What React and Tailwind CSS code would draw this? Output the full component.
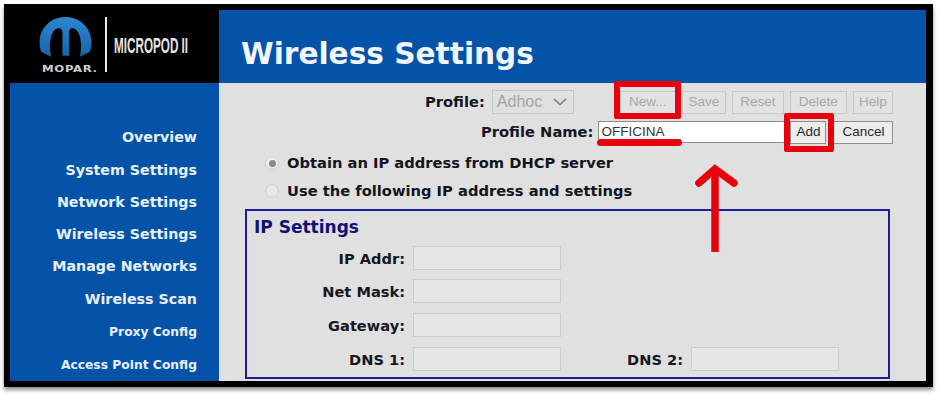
const sans = "font-['Liberation_Sans',Arial,sans-serif]";
const dv = "font-['DejaVu_Sans',Verdana,sans-serif]";

function Nav({ children, small, h }) {
  return (
    <div className={`${h} flex items-center justify-end pr-[22px] font-bold text-[#e8f0fa] ${small ? "text-[12.3px]" : "text-[14.25px]"}`}>
      {children}
    </div>
  );
}

function Btn({ children, w, disabled }) {
  return (
    <div
      className={`h-[23px] ${w} flex items-center justify-center border text-[13.5px] ${sans} ${
        disabled ? "border-[#c8c8c8] text-[#a8a8a8] bg-[#e2e2e2]" : "border-[#8f8f8f] text-[#2a2a2a] bg-[#ececec]"
      }`}
    >
      {children}
    </div>
  );
}

function Field({ label, lw, w = "w-[148px]" }) {
  return (
    <>
      <div className={`${lw} pt-[1px] text-right font-bold text-[14.6px] text-[#16161e] mr-[8px]`}>{label}</div>
      <div className={`${w} h-[24px] border border-[#cccccc] bg-[#e6e6e6]`} />
    </>
  );
}

export default function App() {
  return (
    <div className={`w-[945px] h-[400px] bg-white pl-[4px] pt-[4px] ${dv}`}>
      <div className="relative w-[929px] h-[383px] bg-black p-[6px] shadow-[0_3px_4px_rgba(0,0,0,0.45)]">
        <div className="grid grid-cols-[209px_707px] grid-rows-[73px_298px] h-full">
          <div className="relative -ml-[6px] -mt-[6px] bg-black w-[215px] h-[79px]">
            <svg className="absolute left-[34px] top-[11px]" width="55" height="47" viewBox="0 0 54 46">
              <defs>
                <linearGradient id="mopar" x1="0" y1="0" x2="0" y2="1">
                  <stop offset="0" stopColor="#2a86d2" />
                  <stop offset="1" stopColor="#1666ac" />
                </linearGradient>
              </defs>
              <path d="M3 36C-3 16 11 2 27 2C43 2 57 16 51 36L41 41C44 30 42 14 34 13C31 13 30.5 15 30.5 18L30.5 40L24 40L24 18C24 15 23 13 20 13C12 14 10 30 13 41Z" fill="url(#mopar)" />
            </svg>
            <div className="absolute left-[38px] top-[60px] text-[9px] leading-[10px] font-bold text-[#cfcfcf] tracking-[0.5px] scale-x-[1.3] origin-left">MOPAR.</div>
            <div className="absolute left-[101px] top-[13px] w-[2px] h-[55px] bg-[#e8e8e8]" />
            <div className={`absolute left-[110px] top-[30px] text-[22.5px] leading-[24px] font-bold text-[#e4e4e4] whitespace-nowrap scale-x-[0.52] origin-left ${sans}`}>MICROPOD II</div>
          </div>
          <div className="bg-[#0553a8] flex items-center pl-[22px] pt-[17px]">
            <div className="text-[29.6px] font-bold text-[#f2f5fa] leading-none">Wireless Settings</div>
          </div>

          <div className="bg-[#0553a8] pt-[38px]">
            <Nav h="h-[33px]">Overview</Nav>
            <Nav h="h-[33px]">System Settings</Nav>
            <Nav h="h-[31px]">Network Settings</Nav>
            <Nav h="h-[33px]">Wireless Settings</Nav>
            <Nav h="h-[32px]">Manage Networks</Nav>
            <Nav h="h-[33px]">Wireless Scan</Nav>
            <Nav small h="h-[33px]">Proxy Config</Nav>
            <Nav small h="h-[33px]">Access Point Config</Nav>
          </div>

          <div className="bg-[#e0e0e0] pt-[6px] overflow-hidden">
            <div className="flex items-center h-[26px]">
              <div className="ml-[206px] text-[14.7px] font-bold text-[#16161e]">Profile:</div>
              <div className={`ml-[7px] w-[82px] h-[24px] border border-[#c6c6c6] pl-[4px] pr-[6px] flex items-center justify-between text-[16px] text-[#a4a4a4] ${sans}`}>
                Adhoc
                <svg width="14" height="8" viewBox="0 0 14 8" fill="none" stroke="#777" strokeWidth="1.6"><path d="M1 1l6 5.5L13 1" /></svg>
              </div>
              <div className="ml-[46px] flex gap-[6px]">
                <Btn disabled w="w-[56px]">New...</Btn>
                <Btn disabled w="w-[44px]">Save</Btn>
                <Btn disabled w="w-[52px]">Reset</Btn>
                <Btn disabled w="w-[57px]">Delete</Btn>
                <Btn disabled w="w-[40px]">Help</Btn>
              </div>
            </div>
            <div className="flex items-center h-[26px] mt-[4px]">
              <div className="ml-[262px] text-[14.7px] font-bold text-[#16161e]">Profile Name:</div>
              <div className={`ml-[5px] w-[192px] h-[22px] bg-white border border-[#8a8a8a] pl-[2px] flex items-center text-[13.5px] text-[#333] ${sans}`}>OFFICINA</div>
              <div className="flex gap-[7px]">
                <Btn w="w-[36px]">Add</Btn>
                <Btn w="w-[60px]">Cancel</Btn>
              </div>
            </div>
            <div className="flex items-center h-[28px] mt-[4px] pl-[46px]">
              <div className="w-[14px] h-[14px] rounded-full border border-[#cfcfcf] bg-[#ececec] flex items-center justify-center">
                <div className="w-[7px] h-[7px] rounded-full bg-[#8a8a8a]" />
              </div>
              <div className="ml-[8px] text-[14.7px] font-bold text-[#14141c]">Obtain an IP address from DHCP server</div>
            </div>
            <div className="flex items-center h-[28px] pl-[46px]">
              <div className="w-[14px] h-[14px] rounded-full border border-[#cfcfcf] bg-[#e6e6e6]" />
              <div className="ml-[8px] text-[14.7px] font-bold text-[#14141c]">Use the following IP address and settings</div>
            </div>
            <div className="ml-[26px] mt-[4px] w-[645px] h-[170px] border-2 border-[#1c1c9c] pl-[7px] pt-[4px]">
              <div className="text-[17px] font-bold text-[#10107a] leading-[24px]">IP Settings</div>
              <div className="flex items-center mt-[7px]"><Field lw="w-[151px]" label="IP Addr:" /></div>
              <div className="flex items-center mt-[9px]"><Field lw="w-[151px]" label="Net Mask:" /></div>
              <div className="flex items-center mt-[10px]"><Field lw="w-[151px]" label="Gateway:" /></div>
              <div className="flex items-center mt-[10px]">
                <Field lw="w-[151px]" label="DNS 1:" />
                <Field lw="w-[122px]" label="DNS 2:" />
              </div>
            </div>
          </div>
        </div>

        {/* red annotations */}
        <div className="absolute left-[610px] top-[77px] w-[67px] h-[38px] border-[6px] border-[#e8000c] rounded-[2px]" />
        <div className="absolute left-[780px] top-[109px] w-[50px] h-[39px] border-[6px] border-[#e8000c] rounded-[2px]" />
        <div className="absolute left-[593px] top-[135px] w-[85px] h-[7px] rounded-full bg-[#e8000c]" />
        <svg className="absolute left-[680px] top-[158px]" width="56" height="92" viewBox="0 0 56 92" fill="none" stroke="#e8000c" strokeWidth="7.5">
          <path d="M31 90V6" />
          <path d="M15 21L31 7L50 21" strokeLinecap="round" />
        </svg>
      </div>
    </div>
  );
}
